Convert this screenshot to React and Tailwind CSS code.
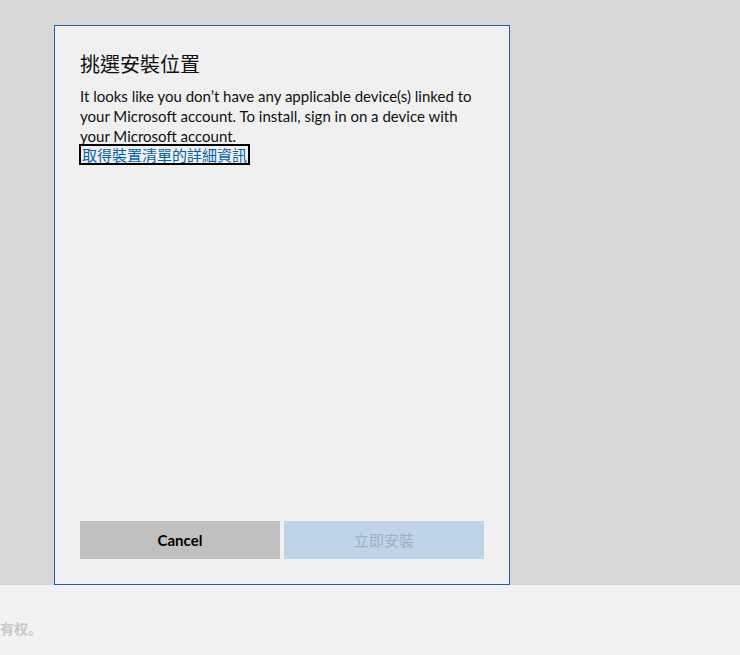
export default function App() {
  return (
    <div className="flex h-[655px] w-[740px] flex-col overflow-hidden bg-[#f2f2f2] font-['Lato','Noto_Sans_CJK_TC',sans-serif]">
      <div className="flex h-[585px] shrink-0 items-start bg-[#d7d7d7] pl-[54px] pt-[25px]">
        <div className="flex h-[560px] w-[456px] flex-col border border-[#1e62a5] bg-[#f0f0f0] px-[25px] pb-[25px]">
          <h1 className="mt-[24px] text-[20px] leading-[28px] text-[#111] font-['Noto_Sans_CJK_TC',sans-serif]">
            挑選安裝位置
          </h1>
          <p className="mt-[8px] whitespace-nowrap text-[15px] leading-[20px] text-[#111]">
            It looks like you don’t have any applicable device(s) linked to
            <br />
            your Microsoft account. To install, sign in on a device with
            <br />
            your Microsoft account.
          </p>
          <div className="-mt-[3px]">
            <span className="-ml-[1px] inline-block cursor-pointer border-2 border-black px-[1px] text-[15px] leading-[17px] text-[#0063b1] font-['Noto_Sans_CJK_TC',sans-serif]">
              取得裝置清單的詳細資訊
            </span>
          </div>
          <div className="mt-auto flex gap-[4px]">
            <button className="h-[38px] w-[200px] bg-[#c0c0c0] text-[15px] font-bold text-black">
              Cancel
            </button>
            <button className="h-[38px] w-[200px] bg-[#bfd4e6] text-[15px] text-[#9eb0c2] font-['Noto_Sans_CJK_TC',sans-serif]">
              立即安裝
            </button>
          </div>
        </div>
      </div>
      <div className="pt-[33px] text-[14px] font-semibold text-[#c9c9c9] font-['Noto_Sans_CJK_SC',sans-serif]">
        有权。
      </div>
    </div>
  )
}
